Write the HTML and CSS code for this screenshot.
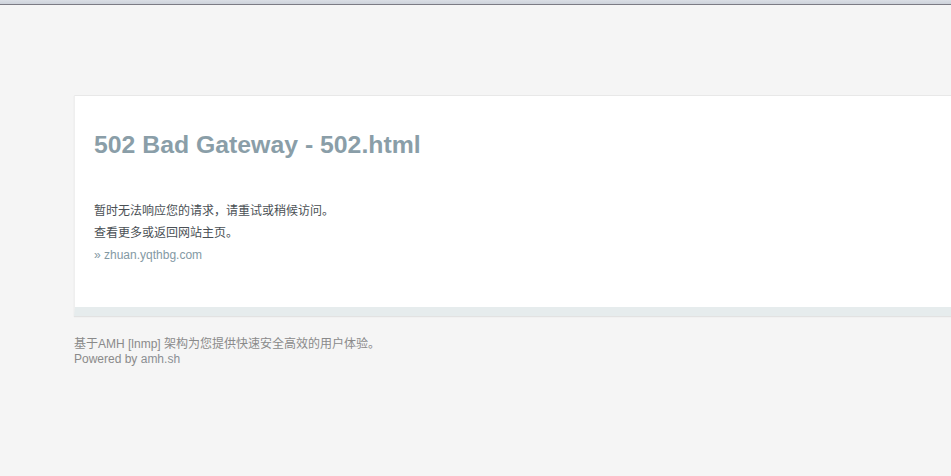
FILE: index.html
```
<!doctype html>
<html lang="zh-CN">
<head>
  <meta charset="utf-8">
  <title>502 Bad Gateway</title>
  <link rel="stylesheet" href="styles.css">
</head>
<body>
	<div class="topbar"></div>
	<div class="wrap">
		<div class="main">
			<h1>502 Bad Gateway - 502.html</h1>
			<div class="msg">
				<p>暂时无法响应您的请求，请重试或稍候访问。</p>
				<p>查看更多或返回网站主页。</p>
				<p><a href="#" class="home">&raquo; zhuan.yqthbg.com</a></p>
			</div>
		</div>
		<div class="footer">
			<p>基于AMH [lnmp] 架构为您提供快速安全高效的用户体验。</p>
			<p>Powered by <a href="#">amh.sh</a></p>
		</div>
	</div>
</body>
</html>
```
FILE: styles.css
```
html,body{
	margin:0; padding:0;
	background:#f5f5f5;
	font-family:"Liberation Sans","Noto Sans CJK SC",Arial,sans-serif;
	font-size:12px;
}
.topbar{
	height:4px;
	background:linear-gradient(#dadee5,#cdd2da);
	border-bottom:1px solid #7b7b84;
}
.wrap{ margin-left:74px; padding-top:90px; }
.main{
	background:#fff;
	border-top:1px solid #e8e8e8;
	border-left:1px solid #efefef;
	border-bottom:9px solid #e6eced;
	box-shadow:0 1px 1px #e2e2e2;
	padding:34px 19px 41px;
}
h1{
	margin:0;
	font-size:24.8px;
	line-height:30px;
	font-weight:bold;
	color:#8a9ea8;
}
.msg{ margin-top:40px; }
.msg p{ margin:0; line-height:22px; color:#4a5055; }
.msg a.home{ color:#8399a4; text-decoration:none; }
.footer{ margin-top:21px; }
.footer p{ margin:0; line-height:15px; color:#8a8a8a; }
.footer a{ color:#8a8f93; text-decoration:none; }
```
